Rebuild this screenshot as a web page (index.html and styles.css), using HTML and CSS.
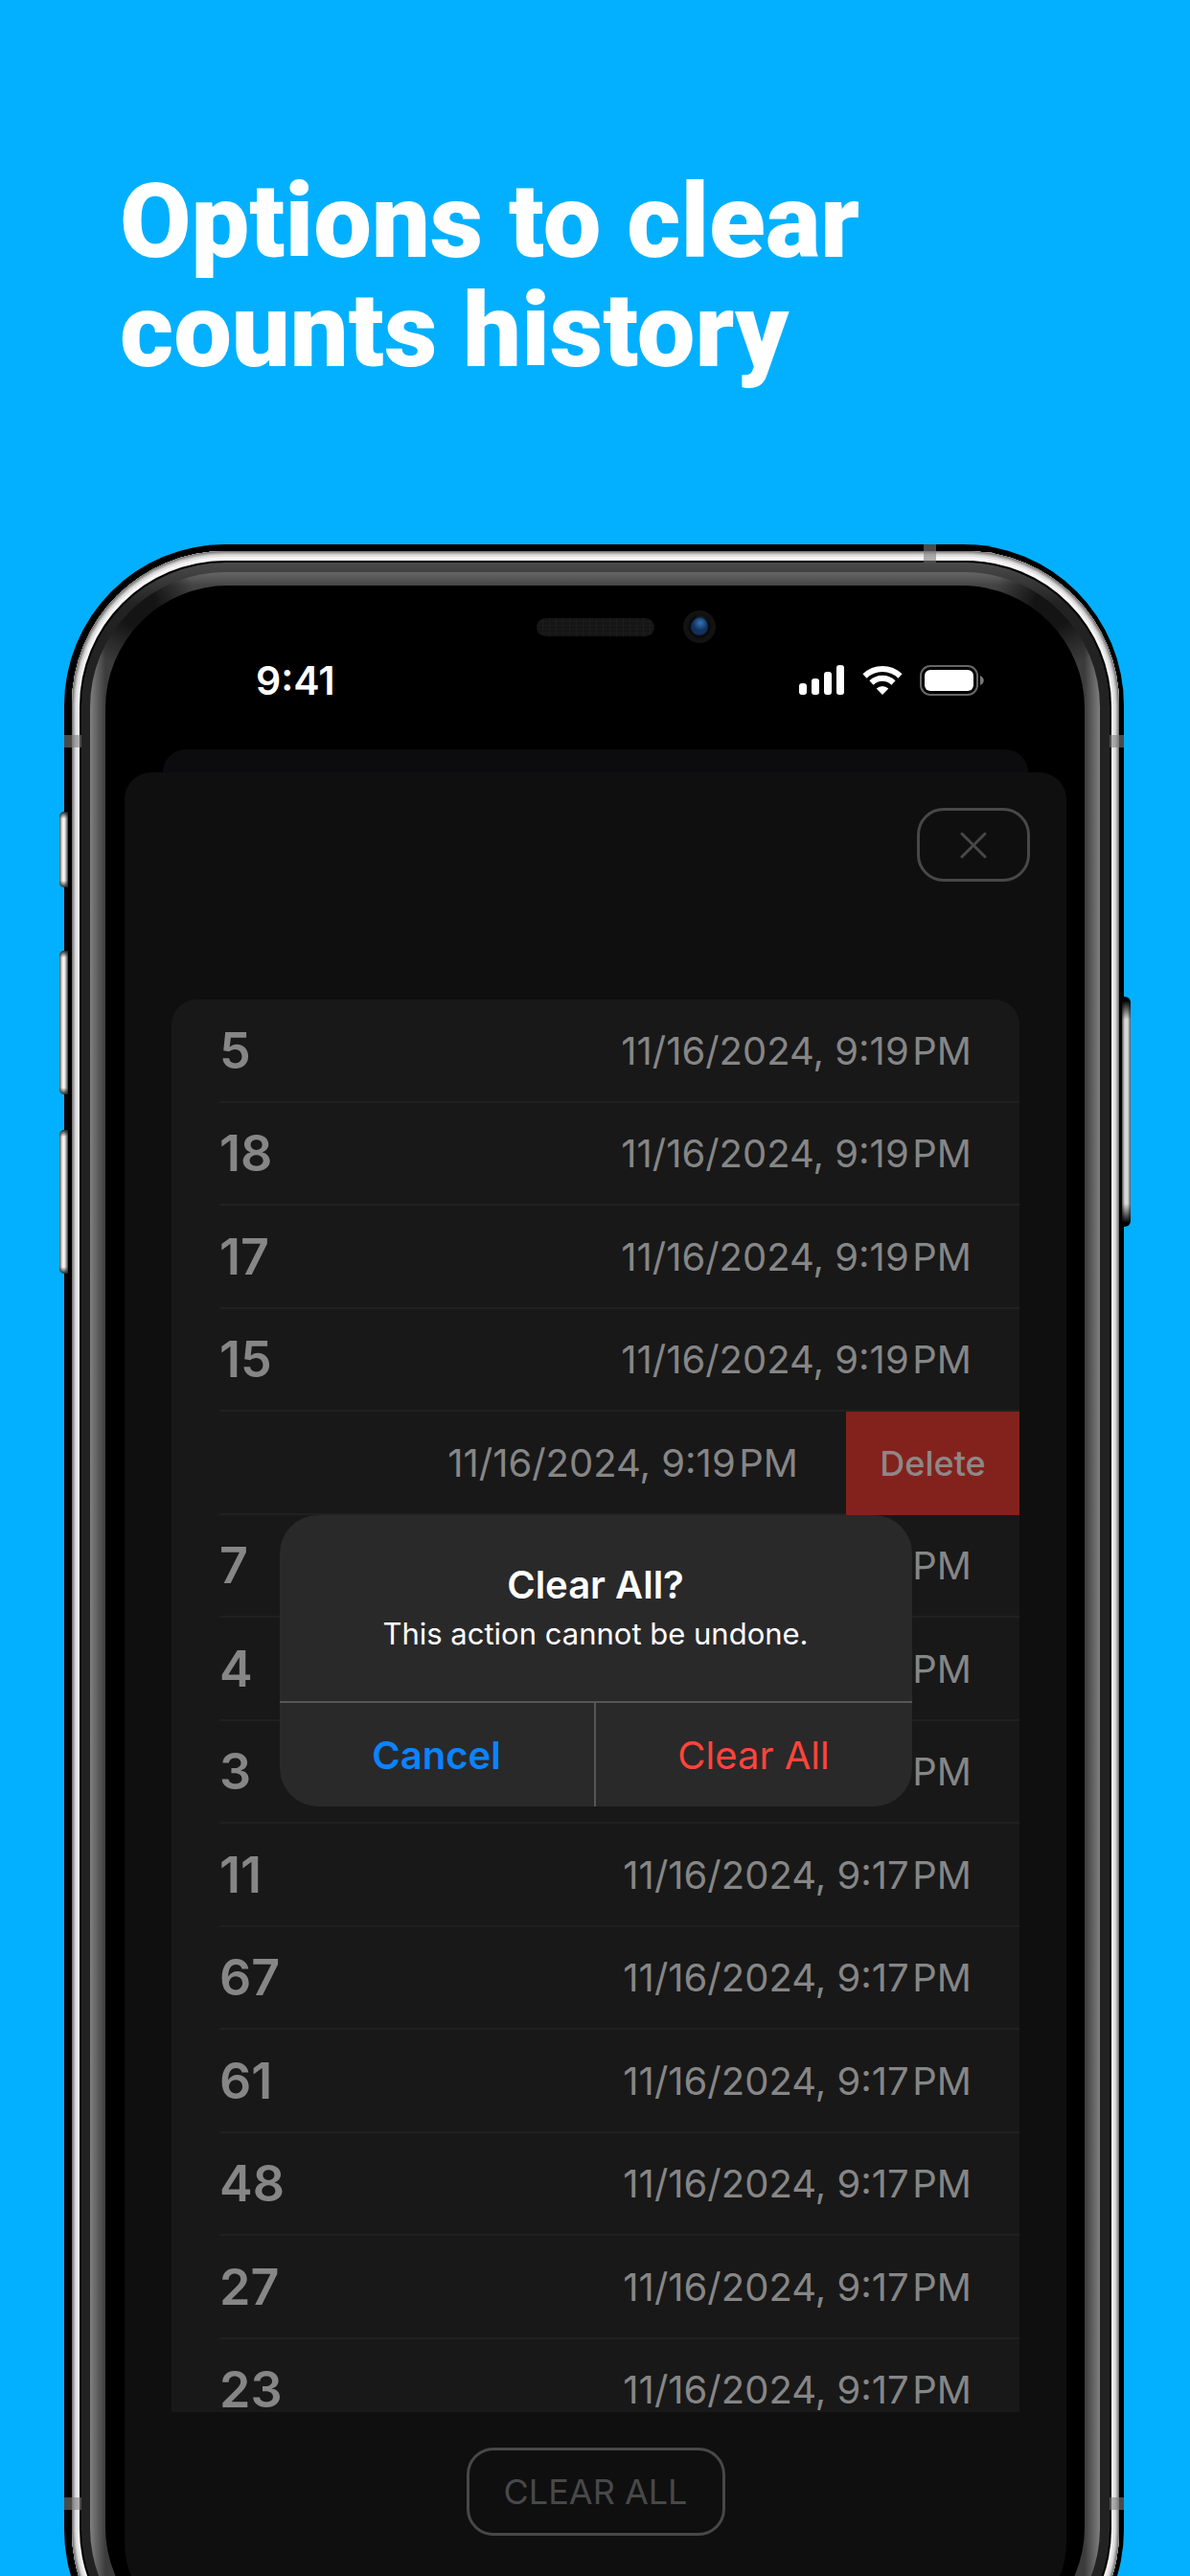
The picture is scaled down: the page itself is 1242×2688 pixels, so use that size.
FILE: index.html
```html
<!DOCTYPE html>
<html lang="en">
<head>
<meta charset="utf-8">
<meta name="viewport" content="width=device-width, initial-scale=1">
<title>Options to clear counts history</title>
<link rel="stylesheet" href="styles.css">
</head>
<body>
<main class="page">
  <h1 class="headline">Options to clear<br>counts history</h1>

  <section class="phone">
    <span class="side-key key-mute"></span>
    <span class="side-key key-up"></span>
    <span class="side-key key-down"></span>
    <span class="side-key key-power"></span>
    <div class="shell">
    <div class="rail"><div class="seam"><div class="bezel"><div class="glass">
      <div class="display">
        <div class="sensors">
          <span class="speaker"></span>
          <span class="camera"></span>
        </div>
        <div class="status">
          <time class="clock">9:41</time>
          <div class="status-icons">
            <svg width="48" height="32" viewBox="0 0 48 32" fill="#fff" aria-label="Signal"><rect x="0" y="19" width="8" height="12" rx="3"/><rect x="13" y="14" width="8" height="17" rx="3"/><rect x="26" y="7" width="8" height="24" rx="3"/><rect x="39" y="0" width="8" height="31" rx="3"/></svg>
            <svg width="42" height="32" viewBox="0 0 42 32" aria-label="Wi-Fi"><g fill="none" stroke="#fff" stroke-width="6"><path d="M2.500 11.500A26.500 26.500 0 0 1 39.500 11.500"/><path d="M9.500 18.500A16.500 16.500 0 0 1 32.500 18.500"/></g><path d="M21 31l-6.300-6.400a9 9 0 0 1 12.600 0z" fill="#fff"/></svg>
            <svg width="67" height="32" viewBox="0 0 67 32" aria-label="Battery"><rect x="1" y="1" width="59" height="30" rx="10" fill="none" stroke="#666" stroke-width="2"/><rect x="5" y="5" width="51" height="22" rx="6" fill="#fff"/><path d="M63 11v10c5-2 5-8 0-10z" fill="#777"/></svg>
          </div>
        </div>
        <div class="sheet-behind"></div>
        <div class="sheet">
          <header class="sheet-head">
            <button class="outline close" aria-label="Close"><svg width="28" height="28" viewBox="0 0 28 28" fill="none" stroke="#48484a" stroke-width="3" stroke-linecap="round"><path d="M2 2l24 24M26 2L2 26"/></svg></button>
          </header>
          <ul class="history">
            <li><b>5</b><time>11/16/2024, 9:19&#8202;PM</time></li>
            <li><b>18</b><time>11/16/2024, 9:19&#8202;PM</time></li>
            <li><b>17</b><time>11/16/2024, 9:19&#8202;PM</time></li>
            <li><b>15</b><time>11/16/2024, 9:19&#8202;PM</time></li>
            <li class="swiped"><time>11/16/2024, 9:19&#8202;PM</time><button class="delete">Delete</button></li>
            <li><b>7</b><time>11/16/2024, 9:18&#8202;PM</time></li>
            <li><b>4</b><time>11/16/2024, 9:18&#8202;PM</time></li>
            <li><b>3</b><time>11/16/2024, 9:18&#8202;PM</time></li>
            <li><b>11</b><time>11/16/2024, 9:17&#8202;PM</time></li>
            <li><b>67</b><time>11/16/2024, 9:17&#8202;PM</time></li>
            <li><b>61</b><time>11/16/2024, 9:17&#8202;PM</time></li>
            <li><b>48</b><time>11/16/2024, 9:17&#8202;PM</time></li>
            <li><b>27</b><time>11/16/2024, 9:17&#8202;PM</time></li>
            <li><b>23</b><time>11/16/2024, 9:17&#8202;PM</time></li>
          </ul>
          <footer class="sheet-foot">
            <button class="outline clear">CLEAR ALL</button>
          </footer>
          <div class="alert" role="alertdialog" aria-labelledby="alert-title" aria-describedby="alert-text">
            <div class="alert-body">
              <h2 id="alert-title">Clear All?</h2>
              <p id="alert-text">This action cannot be undone.</p>
            </div>
            <div class="alert-actions">
              <button class="cancel">Cancel</button>
              <button class="destroy">Clear All</button>
            </div>
          </div>
        </div>
      </div>
    </div></div></div></div>
    </div>
    <span class="band band-top"></span>
    <span class="band band-left"></span>
    <span class="band band-right"></span>
    <span class="band band-left low"></span>
    <span class="band band-right low"></span>
  </section>
</main>
</body>
</html>
```
FILE: styles.css
```css
* { box-sizing: border-box; }

body {
  margin: 0;
  background: #02b0ff;
  font-family: Inter, "Liberation Sans", sans-serif;
}

button {
  margin: 0;
  padding: 0;
  border: 0;
  background: none;
  font: inherit;
  cursor: pointer;
}

.page {
  display: flex;
  flex-direction: column;
  height: 100vh;
  overflow: hidden;
}

.headline {
  margin: 0;
  padding: 174px 125px 166px;
  color: #fff;
  font: 900 108px/114px Roboto, "Liberation Sans", sans-serif;
}

/* Device */
.phone {
  position: relative;
  flex: 1;
  min-height: 0;
  display: grid;
  grid-template-rows: minmax(0, 1fr);
  margin: 0 69px -120px 67px;
}

.shell, .rail, .seam, .bezel, .glass {
  display: grid;
  grid-template: minmax(0, 1fr) / minmax(0, 1fr);
  min-height: 0;
}

.shell {
  padding: 7px 5px 7px 8px;
  border-radius: 168px;
  background: #000;
}

.rail {
  padding: 10px 8px 10px 8px;
  border-radius: 160px;
  background: #c9c7c7;
  box-shadow:
    inset 0 0 0 1px #777,
    inset 0 0 0 2px #999,
    inset 0 0 0 3px #b4b2b2,
    inset 0 0 0 4px #cfcdcd,
    inset 0 0 0 6px #e2e1e1,
    inset 0 0 0 10px #f6f4f4;
}

.seam {
  padding: 2px;
  border-radius: 152px;
  background: #000;
}

.bezel {
  padding: 10px 10px 10px 9px;
  border-radius: 150px;
  background: linear-gradient(#4a4a4a, #222 44px);
}

.glass {
  padding: 14px 16px;
  border-radius: 141px;
  background:
    radial-gradient(circle at 48px 36px, #141414 20px, transparent 64px),
    radial-gradient(circle at calc(100% - 48px) 36px, #141414 20px, transparent 64px),
    linear-gradient(#666, #444 14px, transparent 36px),
    linear-gradient(90deg, #808080, #3c3c3c 16px, #3c3c3c calc(100% - 16px), #808080);
}

.display {
  display: flex;
  flex-direction: column;
  padding: 26px 19px 20px 20px;
  border-radius: 128px;
  background: #000;
}

.side-key {
  position: absolute;
  z-index: 1;
  left: -5px;
  width: 9px;
  border-radius: 5px 0 0 5px;
  background:
    linear-gradient(#222, transparent 7px, transparent calc(100% - 7px), #222),
    linear-gradient(90deg, #555, #e8e4e2 3px, #fff 5px, #777 8px, #333);
}
.key-mute { top: 279px; height: 79px; }
.key-up { top: 424px; height: 150px; }
.key-down { top: 611px; height: 150px; }
.key-power {
  top: 472px;
  left: auto;
  right: -7px;
  height: 240px;
  border-radius: 0 6px 6px 0;
  background:
    linear-gradient(#000 4px, transparent 24px, transparent calc(100% - 24px), #000 calc(100% - 4px)),
    linear-gradient(90deg, #555, #d8d8d8 3px, #d8d8d8 6px, #555);
}

.band {
  position: absolute;
  width: 18px;
  height: 13px;
  background: rgba(125, 125, 125, .6);
}
.band-left { left: 0; top: 199px; }
.band-right { right: 0; top: 199px; width: 15px; }
.band-top { top: 0; right: 196px; width: 13px; height: 19px; }
.low { top: auto; bottom: 189px; }

/* Notch and status bar */
.sensors {
  display: grid;
  grid-template-columns: 1fr 123px 1fr;
  align-items: center;
}

.speaker {
  grid-column: 2;
  height: 19px;
  border-radius: 10px;
  background:
    repeating-linear-gradient(90deg, transparent 0 6px, #1c1c1c 6px 7px),
    repeating-linear-gradient(#151515 0 3px, #1a1a1a 3px 4px);
}

.camera {
  width: 34px;
  height: 34px;
  margin-left: 30px;
  border-radius: 50%;
  background:
    radial-gradient(circle at 18px 13px, rgba(50, 125, 190, .9), transparent 8px),
    radial-gradient(circle, #14305c 8px, #060606 10px, #111 12px, #161616);
}

.status {
  display: flex;
  justify-content: space-between;
  align-items: center;
  height: 34px;
  margin: 22px 86px 55px 137px;
  color: #fff;
}
.clock { font-size: 41px; font-weight: 600; }
.status-icons { display: flex; gap: 18px; }

/* Sheets */
.sheet-behind {
  height: 24px;
  margin: 0 40px;
  border-radius: 24px 24px 0 0;
  background: #0c0c0e;
}

.sheet {
  position: relative;
  flex: 1;
  min-height: 0;
  display: flex;
  flex-direction: column;
  border-radius: 28px 28px 92px 92px;
  background: #0f0f0f;
}

.sheet-head {
  display: flex;
  justify-content: flex-end;
  padding: 37px 38px 123px;
}

.outline {
  border: 3px solid #48484a;
  border-radius: 28px;
  color: #48484a;
}
.close {
  display: grid;
  place-items: center;
  width: 118px;
  height: 77px;
}

.history {
  flex: 1;
  min-height: 0;
  overflow: hidden;
  margin: 0 49px;
  padding: 0;
  border-radius: 26px 26px 0 0;
  background: #181818;
  list-style: none;
  color: #868686;
}
.history li {
  display: flex;
  justify-content: space-between;
  align-items: center;
  height: 108px;
  margin-left: 50px;
  padding-right: 50px;
  border-bottom: 2px solid #202020;
}
.history li:nth-child(even) { height: 107px; }
.history b { font-size: 52px; font-weight: 600; }
.history time { font-size: 40px; }

.history .swiped {
  justify-content: flex-end;
  gap: 50px;
  padding-right: 0;
}
.delete {
  align-self: stretch;
  width: 181px;
  margin-bottom: -2px;
  background: #83221d;
  color: #8d8888;
  font-size: 36px;
  font-weight: 500;
}

.sheet-foot {
  display: flex;
  justify-content: center;
  padding: 37px 0 99px;
}
.clear {
  width: 270px;
  height: 92px;
  font-size: 36px;
}

/* Alert over the list */
.alert {
  position: absolute;
  top: 775px;
  left: 50%;
  width: 660px;
  transform: translateX(-50%);
  overflow: hidden;
  border-radius: 40px;
  background: #29292a;
  color: #fff;
  text-align: center;
}
.alert-body { padding: 47px 24px 45px; }
.alert h2 {
  margin: 0;
  font-size: 40px;
  line-height: 52px;
  font-weight: 600;
}
.alert p {
  margin: 0;
  font-size: 31px;
  line-height: 50px;
}
.alert-actions {
  display: grid;
  grid-template-columns: 1fr 1fr;
  border-top: 2px solid #565658;
}
.alert-actions button {
  height: 108px;
  font-size: 40px;
}
.alert-actions .cancel {
  border-right: 2px solid #565658;
  color: #0a84ff;
  font-weight: 600;
}
.alert-actions .destroy { color: #ff453a; }
```
